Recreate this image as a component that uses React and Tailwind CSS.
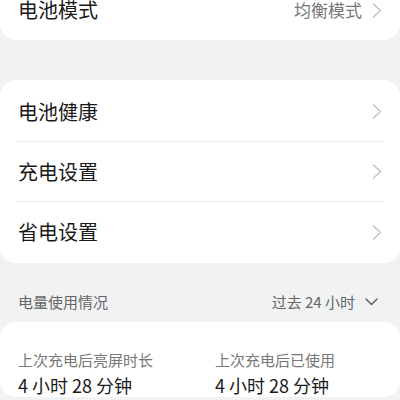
import React from 'react';

const font = { fontFamily: '"Noto Sans CJK SC", "Noto Sans", sans-serif' };

const ChevronRight = () => (
    <svg width="10" height="15" viewBox="0 0 10 15" fill="none" className="shrink-0">
        <path d="M1.5 1 L8.5 7.5 L1.5 14" stroke="#c4c4c4" strokeWidth="1.5" strokeLinecap="round" strokeLinejoin="round" />
    </svg>
);

const ChevronDown = () => (
    <svg width="13" height="8" viewBox="0 0 13 8" fill="none" className="shrink-0">
        <path d="M1 1 L6.5 6.5 L12 1" stroke="#666" strokeWidth="1.5" strokeLinecap="round" strokeLinejoin="round" />
    </svg>
);

const Row = ({ label, divider }) => (
    <div className="h-[60px] flex flex-col">
        <div className="flex-1 flex items-center justify-between pl-[18px] pr-[18px]">
            <span className="text-[20px] leading-[26px] text-[#1a1a1a]">{label}</span>
            <ChevronRight />
        </div>
        {divider && <div className="mx-4 h-px bg-[#ececec]" />}
    </div>
);

const App = () => {
    return (
        <div className="w-[400px] h-[400px] overflow-hidden bg-[#f1f2f4]" style={font}>
            <div className="bg-white rounded-2xl mt-[-20px] h-[60px] flex items-center justify-between pl-[18px] pr-[18px]">
                <span className="text-[20px] leading-[26px] text-[#1a1a1a]">电池模式</span>
                <div className="flex items-center gap-[10px]">
                    <span className="text-[17px] leading-[22px] text-[#777]">均衡模式</span>
                    <ChevronRight />
                </div>
            </div>

            <div className="bg-white rounded-2xl mt-10 pt-[2px] pb-px">
                <Row label="电池健康" divider />
                <Row label="充电设置" divider />
                <Row label="省电设置" />
            </div>

            <div className="flex items-center justify-between pl-[18px] pr-[22px] pt-[29px] pb-[10px]">
                <span className="text-[15px] leading-[20px] text-[#666]">电量使用情况</span>
                <div className="flex items-center gap-[10px]">
                    <span className="text-[15px] leading-[20px] text-[#666]">过去 24 小时</span>
                    <ChevronDown />
                </div>
            </div>

            <div className="bg-white rounded-2xl pt-[28px] pl-[18px] grid grid-cols-[197px_1fr]">
                <div className="flex flex-col gap-[3px]">
                    <span className="text-[15px] leading-[20px] text-[#777]">上次充电后亮屏时长</span>
                    <span className="text-[18px] leading-[24px] text-[#1a1a1a]">4 小时 28 分钟</span>
                </div>
                <div className="flex flex-col gap-[3px]">
                    <span className="text-[15px] leading-[20px] text-[#777]">上次充电后已使用</span>
                    <span className="text-[18px] leading-[24px] text-[#1a1a1a]">4 小时 28 分钟</span>
                </div>
            </div>
        </div>
    );
};

export default App;
